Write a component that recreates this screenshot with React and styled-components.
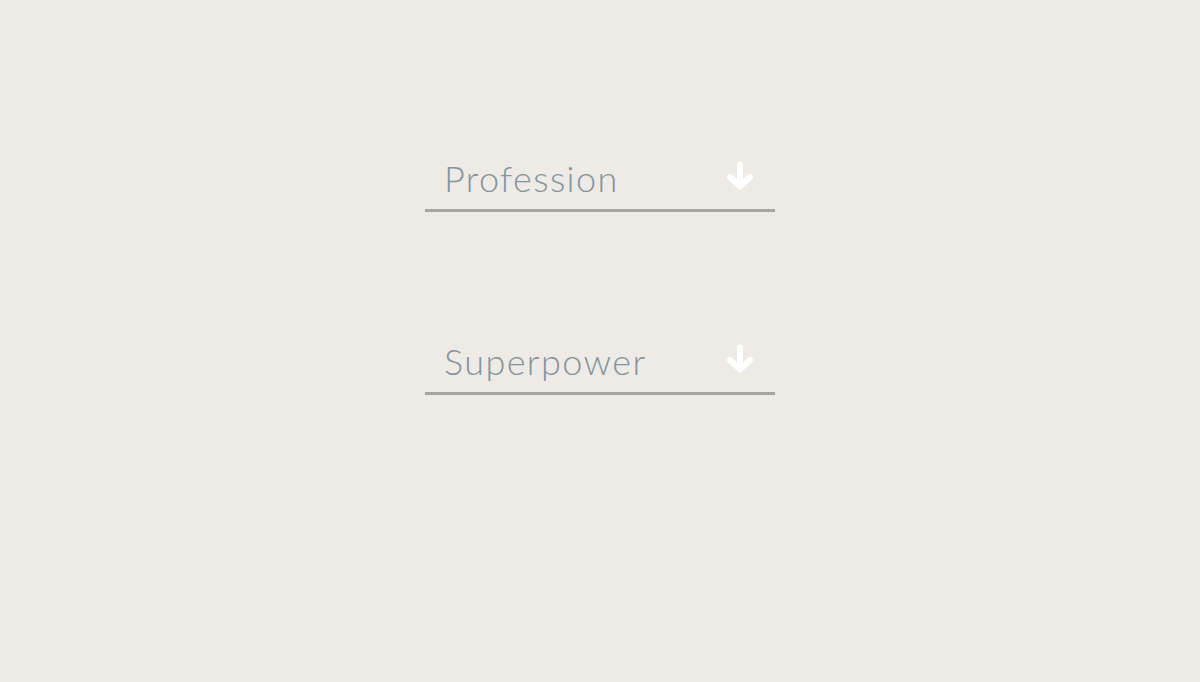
import styled, { createGlobalStyle } from "styled-components";

const GlobalStyle = createGlobalStyle`
  html, body {
    margin: 0;
    padding: 0;
    background: #eeebe6;
  }
  body {
    font-family: "Lato", "Open Sans", sans-serif;
  }
`;

export default function App() {
  return (
    <Page>
      <GlobalStyle />
      <Select label="Profession" />
      <Select label="Superpower" />
    </Page>
  );
}

function Select({ label }) {
  return (
    <SelectBox>
      <Label>{label}</Label>
      <Arrow viewBox="0 0 30 30" aria-hidden="true">
        <path
          d="M15 3.5 V25 M5 16 L15 25.5 L25 16"
          fill="none"
          stroke="currentColor"
          strokeWidth="6"
          strokeLinecap="round"
          strokeLinejoin="round"
        />
      </Arrow>
    </SelectBox>
  );
}

const Page = styled.main`
  min-height: 682px;
  display: flex;
  flex-direction: column;
  align-items: center;
  padding-top: 152px;
  gap: 123px;
  box-sizing: border-box;
`;

const SelectBox = styled.div`
  width: 350px;
  height: 60px;
  box-sizing: border-box;
  border-bottom: 3px solid #a8a4a2;
  display: flex;
  align-items: center;
  justify-content: space-between;
  padding: 0 20px 6px 19px;
`;

const Label = styled.span`
  font-size: 36px;
  font-weight: 300;
  color: #84939b;
  letter-spacing: 1.4px;
`;

const Arrow = styled.svg`
  width: 30px;
  height: 30px;
  color: #ffffff;
  margin-bottom: 3px;
`;
